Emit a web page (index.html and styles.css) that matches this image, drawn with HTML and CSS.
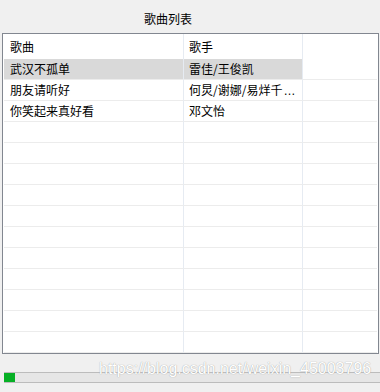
FILE: index.html
```html
<!DOCTYPE html>
<html lang="zh-CN">
<head>
    <meta charset="UTF-8">
    <meta name="viewport" content="width=device-width, initial-scale=1.0">
    <title>歌曲列表</title>
    <link rel="stylesheet" href="styles.css">
</head>
<body>
    <div class="window">
        <!-- Title -->
        <div class="title">歌曲列表</div>

        <!-- Song table -->
        <div class="table">
            <div class="row header">
                <div class="cell col-name">歌曲</div>
                <div class="cell col-singer">歌手</div>
                <div class="cell col-rest"></div>
            </div>
            <div class="row selected">
                <div class="cell col-name">武汉不孤单</div>
                <div class="cell col-singer">雷佳/王俊凯</div>
                <div class="cell col-rest"></div>
            </div>
            <div class="row">
                <div class="cell col-name">朋友请听好</div>
                <div class="cell col-singer">何炅/谢娜/易烊千<span class="elide">…</span></div>
                <div class="cell col-rest"></div>
            </div>
            <div class="row">
                <div class="cell col-name">你笑起来真好看</div>
                <div class="cell col-singer">邓文怡</div>
                <div class="cell col-rest"></div>
            </div>
            <div class="row"><div class="cell col-name"></div><div class="cell col-singer"></div><div class="cell col-rest"></div></div>
            <div class="row"><div class="cell col-name"></div><div class="cell col-singer"></div><div class="cell col-rest"></div></div>
            <div class="row"><div class="cell col-name"></div><div class="cell col-singer"></div><div class="cell col-rest"></div></div>
            <div class="row"><div class="cell col-name"></div><div class="cell col-singer"></div><div class="cell col-rest"></div></div>
            <div class="row"><div class="cell col-name"></div><div class="cell col-singer"></div><div class="cell col-rest"></div></div>
            <div class="row"><div class="cell col-name"></div><div class="cell col-singer"></div><div class="cell col-rest"></div></div>
            <div class="row"><div class="cell col-name"></div><div class="cell col-singer"></div><div class="cell col-rest"></div></div>
            <div class="row"><div class="cell col-name"></div><div class="cell col-singer"></div><div class="cell col-rest"></div></div>
            <div class="row"><div class="cell col-name"></div><div class="cell col-singer"></div><div class="cell col-rest"></div></div>
            <div class="row"><div class="cell col-name"></div><div class="cell col-singer"></div><div class="cell col-rest"></div></div>
            <div class="row"><div class="cell col-name"></div><div class="cell col-singer"></div><div class="cell col-rest"></div></div>
        </div>

        <!-- Playback progress -->
        <div class="progress">
            <div class="progress-chunk" style="width: 11px;"></div>
        </div>

        <div class="watermark">https://blog.csdn.net/weixin_45003796</div>
    </div>
</body>
</html>
```

FILE: styles.css
```css
/* Reset and base styles */
* {
    margin: 0;
    padding: 0;
    box-sizing: border-box;
}

body {
    font-family: "Noto Sans CJK SC", "Microsoft YaHei", sans-serif;
    font-size: 12px;
    background: #f0f0f0;
    color: #000;
    overflow: hidden;
}

.window {
    position: relative;
    width: 380px;
    height: 392px;
}

/* Title */
.title {
    height: 33px;
    padding-top: 4px;
    padding-left: 144px;
    line-height: 29px;
}

/* Table */
.table {
    margin-left: 2px;
    width: 377px;
    height: 321px;
    border: 1px solid #828790;
    background: #fff;
    padding-left: 1px;
    overflow: hidden;
}

.row {
    display: grid;
    grid-template-columns: 180px 119px 74px;
    height: 21px;
}

.row.header {
    height: 25px;
}

.cell {
    line-height: 20px;
    white-space: nowrap;
    overflow: hidden;
    border-bottom: 1px solid #ececec;
}

.header .cell {
    line-height: 25px;
    border-bottom: none;
}

.col-name,
.col-singer {
    border-right: 1px solid #e6ebf2;
}

.col-name {
    padding-left: 6px;
}

.col-singer {
    padding-left: 5px;
}

.elide {
    font-family: "Liberation Sans", Arial, sans-serif;
    margin-left: 1px;
}

.selected .col-name,
.selected .col-singer {
    background: #d9d9d9;
}

/* Progress bar */
.progress {
    margin-top: 18px;
    margin-left: 4px;
    width: 380px;
    height: 11px;
    background: #e6e6e6;
    border-top: 1px solid #bcbcbc;
    border-bottom: 1px solid #bcbcbc;
}

.progress-chunk {
    height: 100%;
    background: #06b025;
}

/* Watermark over the bottom */
.watermark {
    position: absolute;
    left: 99px;
    top: 361px;
    font-family: "Liberation Sans", Arial, sans-serif;
    font-size: 16px;
    line-height: 16px;
    color: #fff;
    text-shadow: 0 0 1px #8c8c8c;
    white-space: nowrap;
}
```
